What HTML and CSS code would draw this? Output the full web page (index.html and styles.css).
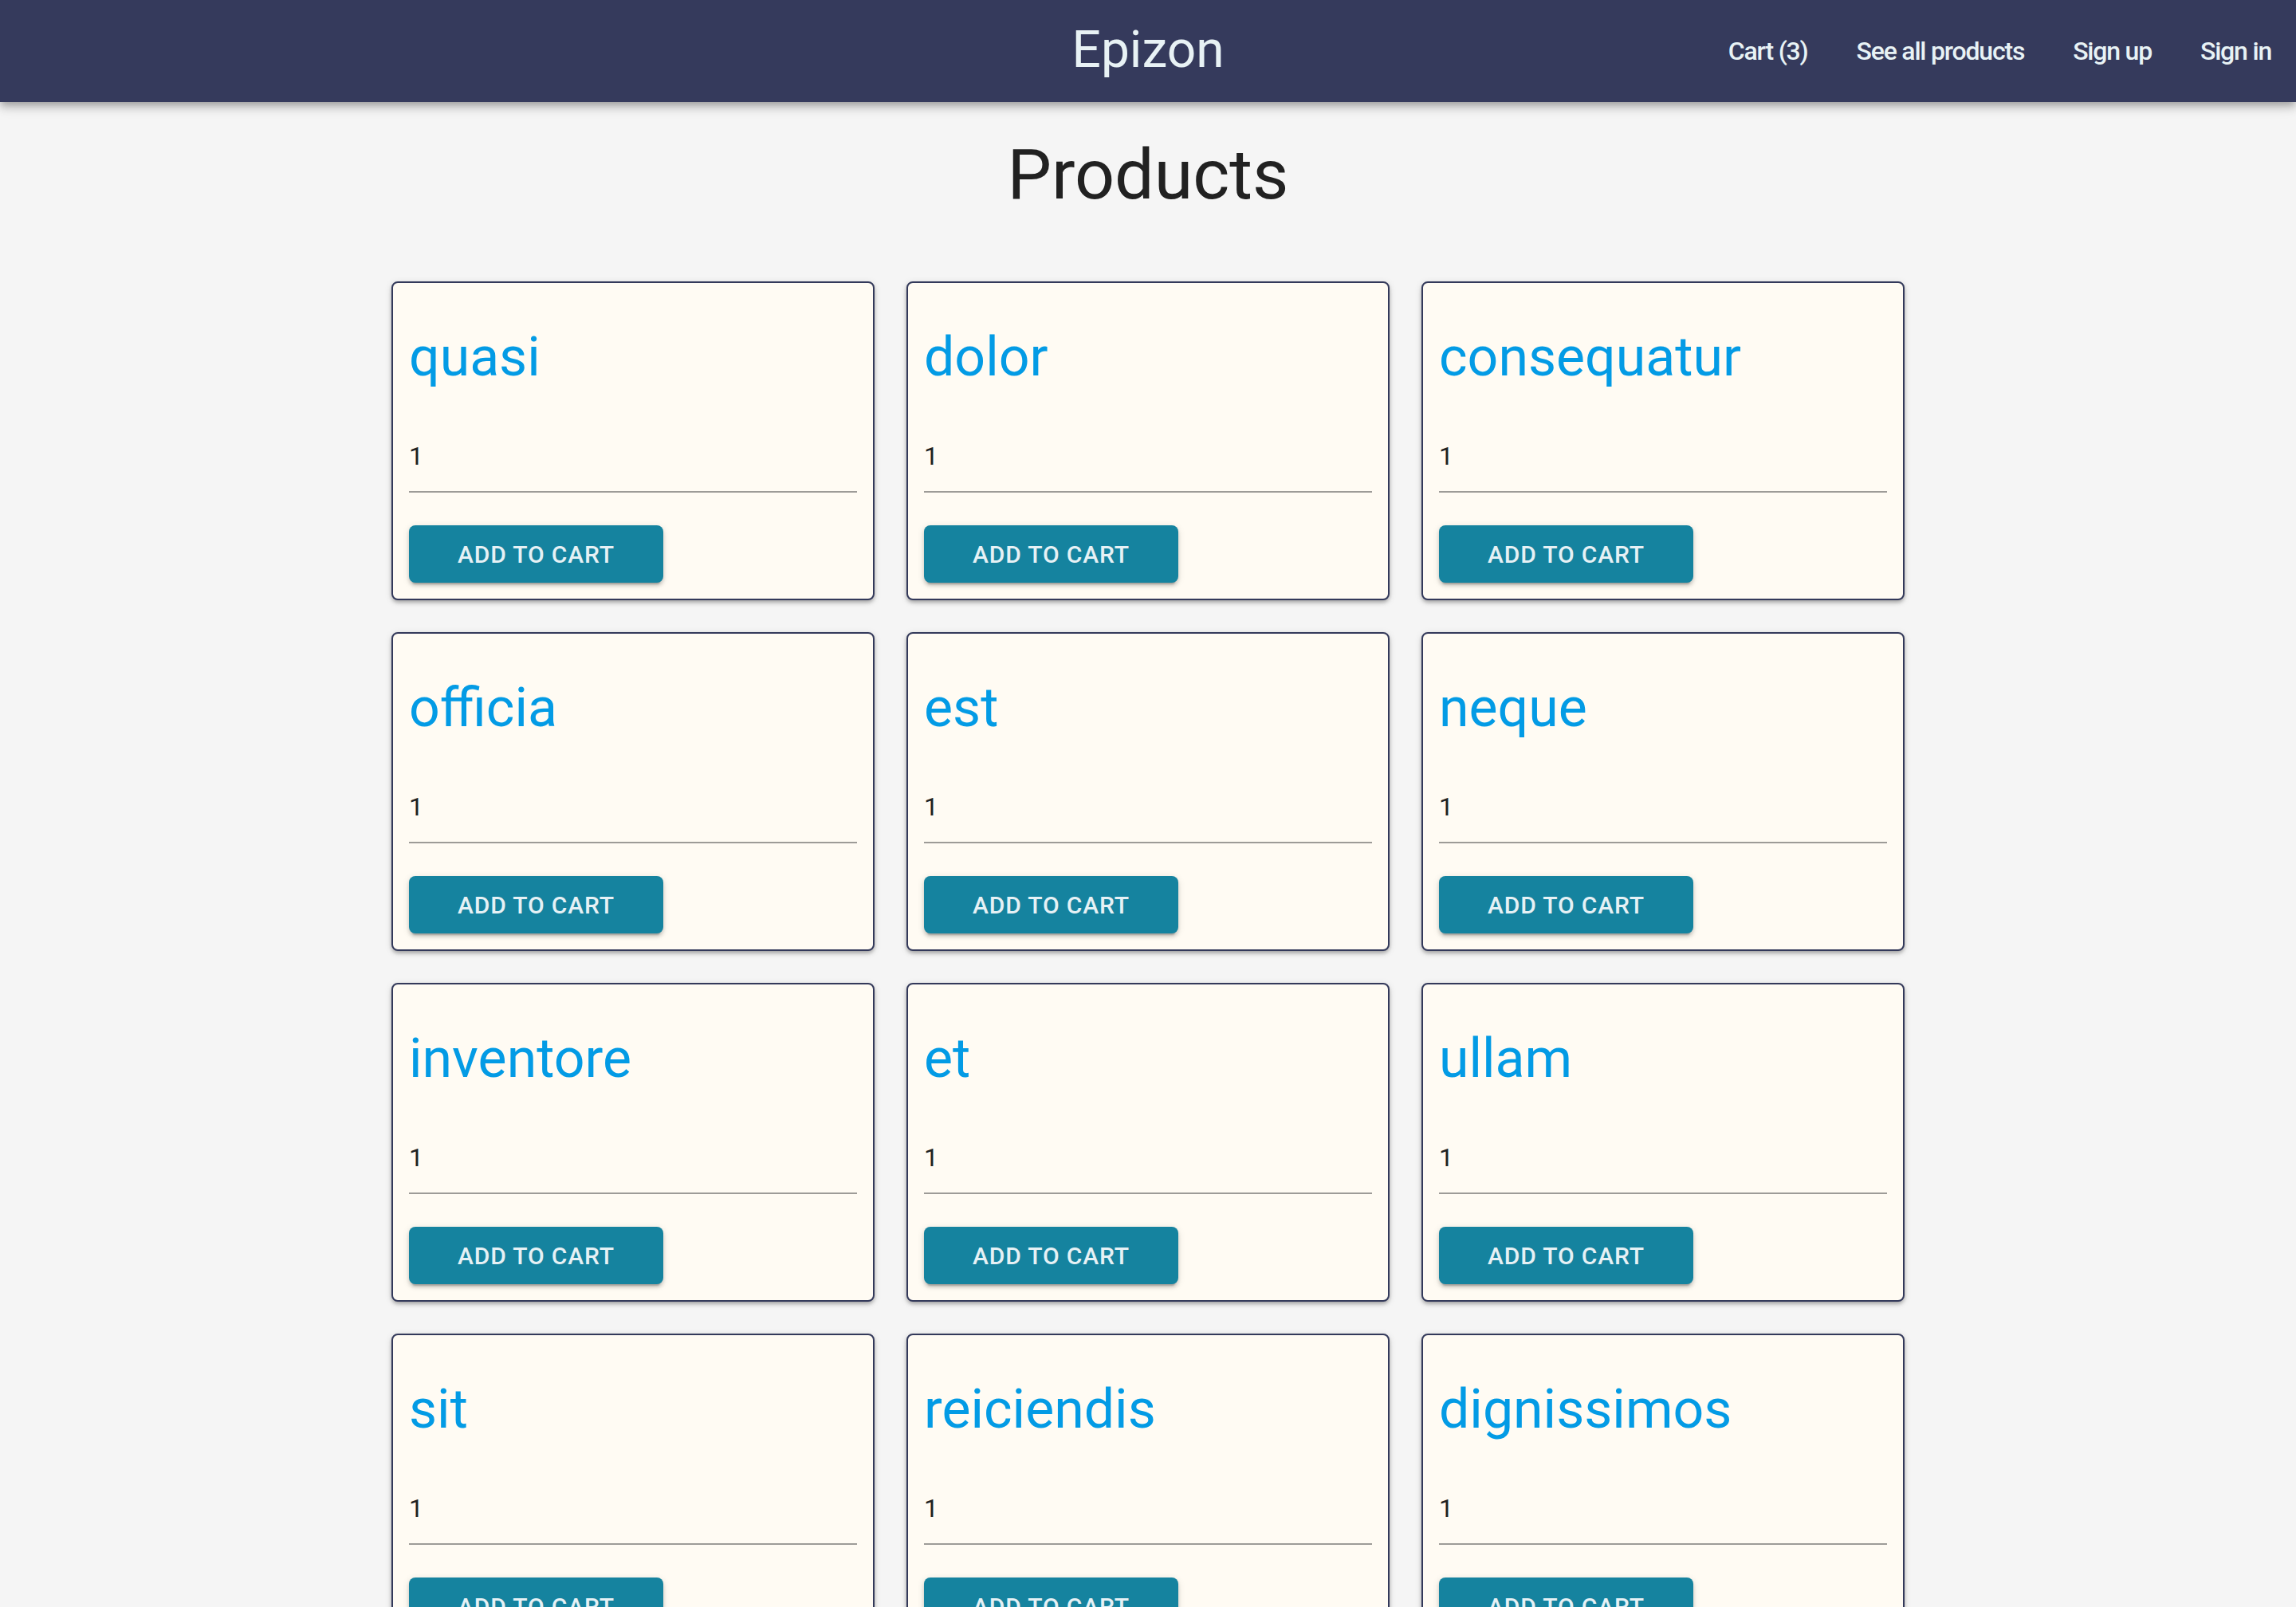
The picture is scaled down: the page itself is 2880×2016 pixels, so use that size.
FILE: index.html
```html
<!DOCTYPE html>
<html lang="en">
<head>
<meta charset="utf-8">
<title>Epizon</title>
<link rel="stylesheet" href="styles.css">
</head>
<body>
<header class="appbar">
  <div class="appbar-side"></div>
  <h1 class="brand">Epizon</h1>
  <nav class="nav">
    <a class="nav-link" href="#">Cart (3)</a>
    <a class="nav-link" href="#">See all products</a>
    <a class="nav-link" href="#">Sign up</a>
    <a class="nav-link" href="#">Sign in</a>
  </nav>
</header>
<main class="page">
  <h2 class="page-title">Products</h2>
  <div class="grid">
    <article class="card"><h3 class="card-title">quasi</h3><div class="qty"><input class="qty-input" type="text" value="1"></div><button class="add-btn">Add to cart</button></article>
    <article class="card"><h3 class="card-title">dolor</h3><div class="qty"><input class="qty-input" type="text" value="1"></div><button class="add-btn">Add to cart</button></article>
    <article class="card"><h3 class="card-title">consequatur</h3><div class="qty"><input class="qty-input" type="text" value="1"></div><button class="add-btn">Add to cart</button></article>
    <article class="card"><h3 class="card-title">officia</h3><div class="qty"><input class="qty-input" type="text" value="1"></div><button class="add-btn">Add to cart</button></article>
    <article class="card"><h3 class="card-title">est</h3><div class="qty"><input class="qty-input" type="text" value="1"></div><button class="add-btn">Add to cart</button></article>
    <article class="card"><h3 class="card-title">neque</h3><div class="qty"><input class="qty-input" type="text" value="1"></div><button class="add-btn">Add to cart</button></article>
    <article class="card"><h3 class="card-title">inventore</h3><div class="qty"><input class="qty-input" type="text" value="1"></div><button class="add-btn">Add to cart</button></article>
    <article class="card"><h3 class="card-title">et</h3><div class="qty"><input class="qty-input" type="text" value="1"></div><button class="add-btn">Add to cart</button></article>
    <article class="card"><h3 class="card-title">ullam</h3><div class="qty"><input class="qty-input" type="text" value="1"></div><button class="add-btn">Add to cart</button></article>
    <article class="card"><h3 class="card-title">sit</h3><div class="qty"><input class="qty-input" type="text" value="1"></div><button class="add-btn">Add to cart</button></article>
    <article class="card"><h3 class="card-title">reiciendis</h3><div class="qty"><input class="qty-input" type="text" value="1"></div><button class="add-btn">Add to cart</button></article>
    <article class="card"><h3 class="card-title">dignissimos</h3><div class="qty"><input class="qty-input" type="text" value="1"></div><button class="add-btn">Add to cart</button></article>
  </div>
</main>
</body>
</html>
```
FILE: styles.css
```css
html {
  scrollbar-width: none;
}
html::-webkit-scrollbar {
  display: none;
}
body {
  margin: 0;
  background: #f5f5f5;
  font-family: Roboto, "Liberation Sans", sans-serif;
  color: #212121;
}
.appbar {
  position: relative;
  z-index: 2;
  height: 128px;
  background: #353a5c;
  display: grid;
  grid-template-columns: 1fr auto 1fr;
  align-items: center;
  box-shadow: 0 4px 8px -2px rgba(0,0,0,0.2), 0 8px 10px 0 rgba(0,0,0,0.14), 0 2px 20px 0 rgba(0,0,0,0.12);
}
.brand {
  margin: 0;
  font-size: 64px;
  font-weight: 400;
  line-height: 75px;
  color: #e8f2f5;
  position: relative;
  top: -2px;
}
.nav {
  display: flex;
  justify-content: flex-end;
  gap: 61px;
  padding-right: 31px;
}
.nav-link {
  font-size: 32px;
  font-weight: 500;
  letter-spacing: -1.2px;
  line-height: 38px;
  color: #e8f2f5;
  text-decoration: none;
}
.page {
  padding-top: 39px;
}
.page-title {
  margin: 0;
  text-align: center;
  font-size: 88px;
  font-weight: 400;
  line-height: 104px;
  color: #212121;
}
.grid {
  width: 1898px;
  margin: 82px auto 0;
  display: grid;
  grid-template-columns: repeat(3, 1fr);
  gap: 40px;
}
.card {
  background: #fffbf3;
  border: 2px solid #33395a;
  border-radius: 8px;
  padding: 20px;
  box-shadow: 0 4px 6px -2px rgba(0,0,0,0.2), 0 2px 4px 0 rgba(0,0,0,0.14), 0 2px 10px 0 rgba(0,0,0,0.12);
  display: flex;
  flex-direction: column;
  align-items: flex-start;
}
.card-title {
  margin: 31px 0 0;
  font-size: 68px;
  font-weight: 400;
  line-height: 84px;
  color: #039be5;
}
.qty {
  align-self: stretch;
  margin-top: 51px;
  padding: 12px 0 25px;
  border-bottom: 2px solid #9d9b97;
}
.qty-input {
  display: block;
  width: 100%;
  height: 38px;
  padding: 0;
  margin: 0;
  border: 0;
  outline: none;
  background: transparent;
  font-family: Roboto, "Liberation Sans", sans-serif;
  font-size: 32px;
  line-height: 38px;
  color: #212121;
}
.add-btn {
  margin-top: 41px;
  height: 72px;
  padding: 0 61px;
  border: 0;
  border-radius: 8px;
  background: #15839f;
  color: #e6f1f5;
  font-family: Roboto, "Liberation Sans", sans-serif;
  font-size: 30px;
  font-weight: 500;
  letter-spacing: 0.86px;
  text-transform: uppercase;
  box-shadow: 0 6px 2px -4px rgba(0,0,0,0.2), 0 4px 4px 0 rgba(0,0,0,0.14), 0 2px 10px 0 rgba(0,0,0,0.12);
  cursor: pointer;
}
```
